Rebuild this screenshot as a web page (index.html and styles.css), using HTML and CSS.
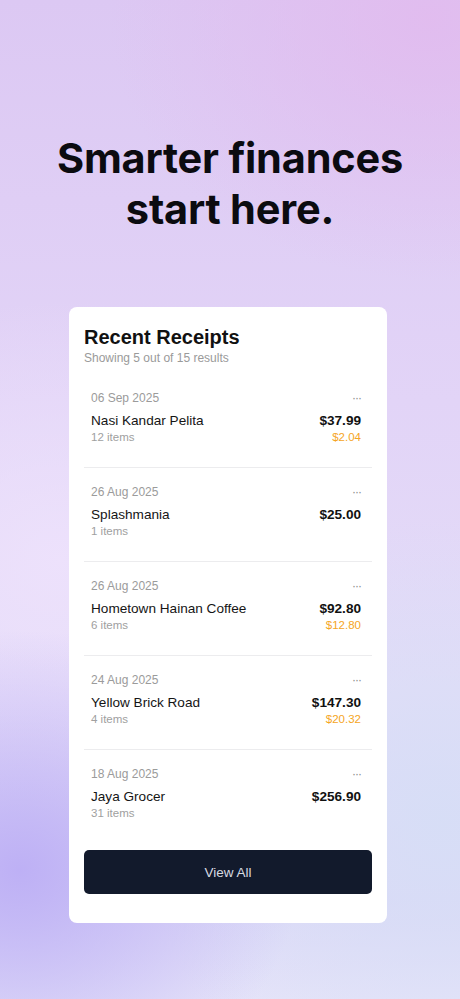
FILE: index.html
```html
<!DOCTYPE html>
<html lang="en">
<head>
    <meta charset="UTF-8">
    <meta name="viewport" content="width=device-width, initial-scale=1.0">
    <title>Recent Receipts</title>
    <link rel="stylesheet" href="styles.css">
</head>
<body>
    <div class="page">
        <h1 class="headline">Smarter finances<br>start here.</h1>

        <div class="card">
            <h2 class="card-title">Recent Receipts</h2>
            <p class="card-sub">Showing 5 out of 15 results</p>

            <div class="receipts">
                <div class="receipt">
                    <span class="date">06 Sep 2025</span>
                    <span class="dots">&middot;&middot;&middot;</span>
                    <span class="name">Nasi Kandar Pelita</span>
                    <span class="amount">$37.99</span>
                    <span class="count">12 items</span>
                    <span class="saved">$2.04</span>
                </div>
                <div class="receipt">
                    <span class="date">26 Aug 2025</span>
                    <span class="dots">&middot;&middot;&middot;</span>
                    <span class="name">Splashmania</span>
                    <span class="amount">$25.00</span>
                    <span class="count">1 items</span>
                    <span class="saved"></span>
                </div>
                <div class="receipt">
                    <span class="date">26 Aug 2025</span>
                    <span class="dots">&middot;&middot;&middot;</span>
                    <span class="name">Hometown Hainan Coffee</span>
                    <span class="amount">$92.80</span>
                    <span class="count">6 items</span>
                    <span class="saved">$12.80</span>
                </div>
                <div class="receipt">
                    <span class="date">24 Aug 2025</span>
                    <span class="dots">&middot;&middot;&middot;</span>
                    <span class="name">Yellow Brick Road</span>
                    <span class="amount">$147.30</span>
                    <span class="count">4 items</span>
                    <span class="saved">$20.32</span>
                </div>
                <div class="receipt">
                    <span class="date">18 Aug 2025</span>
                    <span class="dots">&middot;&middot;&middot;</span>
                    <span class="name">Jaya Grocer</span>
                    <span class="amount">$256.90</span>
                    <span class="count">31 items</span>
                    <span class="saved"></span>
                </div>
            </div>

            <button class="view-all">View All</button>
        </div>
    </div>
</body>
</html>
```

FILE: styles.css
```css
* {
    box-sizing: border-box;
}
body {
    margin: 0;
    min-height: 999px;
    font-family: "Liberation Sans", Arial, sans-serif;
    background-color: #e2d6f6;
    background-image:
        radial-gradient(ellipse 320px 260px at 430px 20px, rgba(226, 186, 238, 0.85), rgba(226, 186, 238, 0)),
        radial-gradient(ellipse 280px 240px at 20px 870px, rgba(188, 174, 245, 0.95), rgba(188, 174, 245, 0)),
        radial-gradient(ellipse 300px 300px at 440px 820px, rgba(214, 222, 246, 0.9), rgba(214, 222, 246, 0)),
        radial-gradient(ellipse 300px 260px at 60px 560px, rgba(238, 226, 252, 0.9), rgba(238, 226, 252, 0)),
        linear-gradient(180deg, #dcc8f3 0%, #e2d4f7 40%, #e4ddf8 70%, #dcd8f7 90%, #e6e4f9 100%);
}
.page {
    display: flex;
    flex-direction: column;
    align-items: center;
    padding-top: 133px;
}
.headline {
    margin: 0;
    font-family: Inter, "Liberation Sans", sans-serif;
    font-size: 41.5px;
    font-weight: 700;
    line-height: 51px;
    letter-spacing: -0.2px;
    text-align: center;
    color: #0b0b10;
}
.card {
    margin-top: 72px;
    margin-right: 4px;
    width: 318px;
    background: #ffffff;
    border-radius: 8px;
    padding: 18px 15px 29px;
}
.card-title {
    margin: 0;
    font-size: 20px;
    line-height: 24px;
    font-weight: 700;
    color: #111111;
}
.card-sub {
    margin: 2px 0 0;
    font-size: 12px;
    line-height: 15px;
    color: #9a9a9a;
}
.receipts {
    margin-top: 8px;
}
.receipt {
    display: grid;
    grid-template-columns: 1fr auto;
    padding: 16px 11px 22px 7px;
    border-bottom: 1px solid #ececee;
}
.receipt:last-child {
    border-bottom: none;
}
.date {
    font-size: 12px;
    line-height: 16px;
    color: #9b9b9b;
}
.dots {
    font-size: 12px;
    line-height: 16px;
    color: #8c8c8c;
    text-align: right;
    letter-spacing: -1px;
}
.name {
    margin-top: 6px;
    font-size: 13.6px;
    line-height: 18px;
    color: #151515;
}
.amount {
    margin-top: 6px;
    font-size: 13.6px;
    line-height: 18px;
    font-weight: 700;
    color: #111111;
    text-align: right;
}
.count {
    font-size: 11.5px;
    line-height: 15px;
    color: #a0a0a0;
}
.saved {
    font-size: 11.5px;
    line-height: 15px;
    color: #f5a524;
    text-align: right;
}
.view-all {
    display: block;
    width: 100%;
    height: 44px;
    margin-top: 7px;
    border: none;
    border-radius: 5px;
    background-color: #121a2c;
    color: #d8dae2;
    font-family: "Liberation Sans", Arial, sans-serif;
    font-size: 13.5px;
    cursor: pointer;
}
```
